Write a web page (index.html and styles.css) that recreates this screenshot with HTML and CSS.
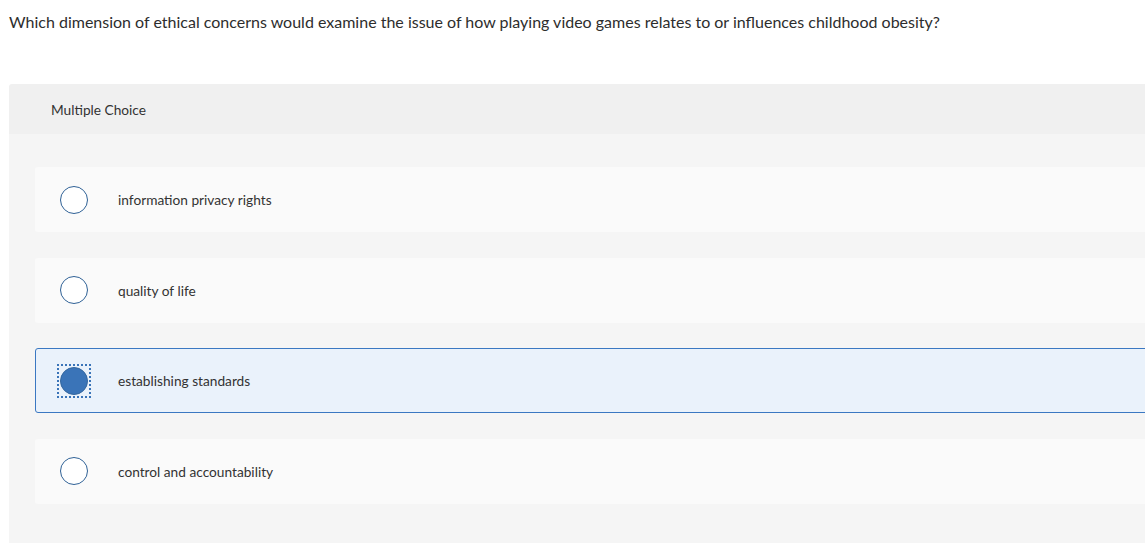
FILE: index.html
```html
<!DOCTYPE html>
<html>
<head>
<meta charset="utf-8">
<link rel="stylesheet" href="styles.css">
</head>
<body>
<p class="question">Which dimension of ethical concerns would examine the issue of how playing video games relates to or influences childhood obesity?</p>
<div class="panel">
  <div class="panel-head">Multiple Choice</div>
  <div class="panel-body">
    <div class="option"><span class="radio-box"><span class="radio"></span></span><span class="label">information privacy rights</span></div>
    <div class="option"><span class="radio-box"><span class="radio"></span></span><span class="label">quality of life</span></div>
    <div class="option selected"><span class="radio-box"><span class="radio"></span></span><span class="label">establishing standards</span></div>
    <div class="option"><span class="radio-box"><span class="radio"></span></span><span class="label">control and accountability</span></div>
  </div>
</div>
</body>
</html>
```
FILE: styles.css
```css
html, body {
  margin: 0;
  padding: 0;
  background: #ffffff;
  overflow: hidden;
}
body {
  font-family: Lato, "Liberation Sans", sans-serif;
  color: #2b2b2b;
  width: 1145px;
  height: 543px;
}
.question {
  margin: 0;
  padding: 13px 0 0 9px;
  font-size: 16px;
  line-height: 18px;
  color: #2d2d2d;
}
.panel {
  margin: 53px 0 0 9px;
  width: 1150px;
  border-radius: 3px 0 0 0;
  overflow: hidden;
}
.panel-head {
  background: #f0f0f0;
  height: 50px;
  display: flex;
  align-items: center;
  padding-left: 42px;
  font-size: 13.7px;
  color: #333;
}
.panel-body {
  background: #f5f5f5;
  padding: 33px 0 0 26px;
  display: flex;
  flex-direction: column;
  gap: 25.5px;
  height: 409px;
  box-sizing: border-box;
}
.option {
  flex: none;
  background: #fafafa;
  height: 65px;
  border-radius: 3px;
  display: flex;
  align-items: center;
  padding-left: 24px;
  box-sizing: border-box;
  border: 1px solid transparent;
}
.option.selected {
  background: #eaf2fb;
  border-color: #3b78c2;
}
.radio-box {
  width: 28px;
  height: 28px;
  flex: none;
  display: block;
}
.radio {
  display: block;
  width: 28px;
  height: 28px;
  box-sizing: border-box;
  border: 1.5px solid #2f6196;
  border-radius: 50%;
  background: #fff;
}
.selected .radio-box {
  outline: 2px dotted #3a74b8;
  outline-offset: 1px;
}
.selected .radio {
  background: #3a74b8;
  border-color: #33679f;
}
.label {
  margin-left: 30px;
  font-size: 13.7px;
  color: #333;
}
```
